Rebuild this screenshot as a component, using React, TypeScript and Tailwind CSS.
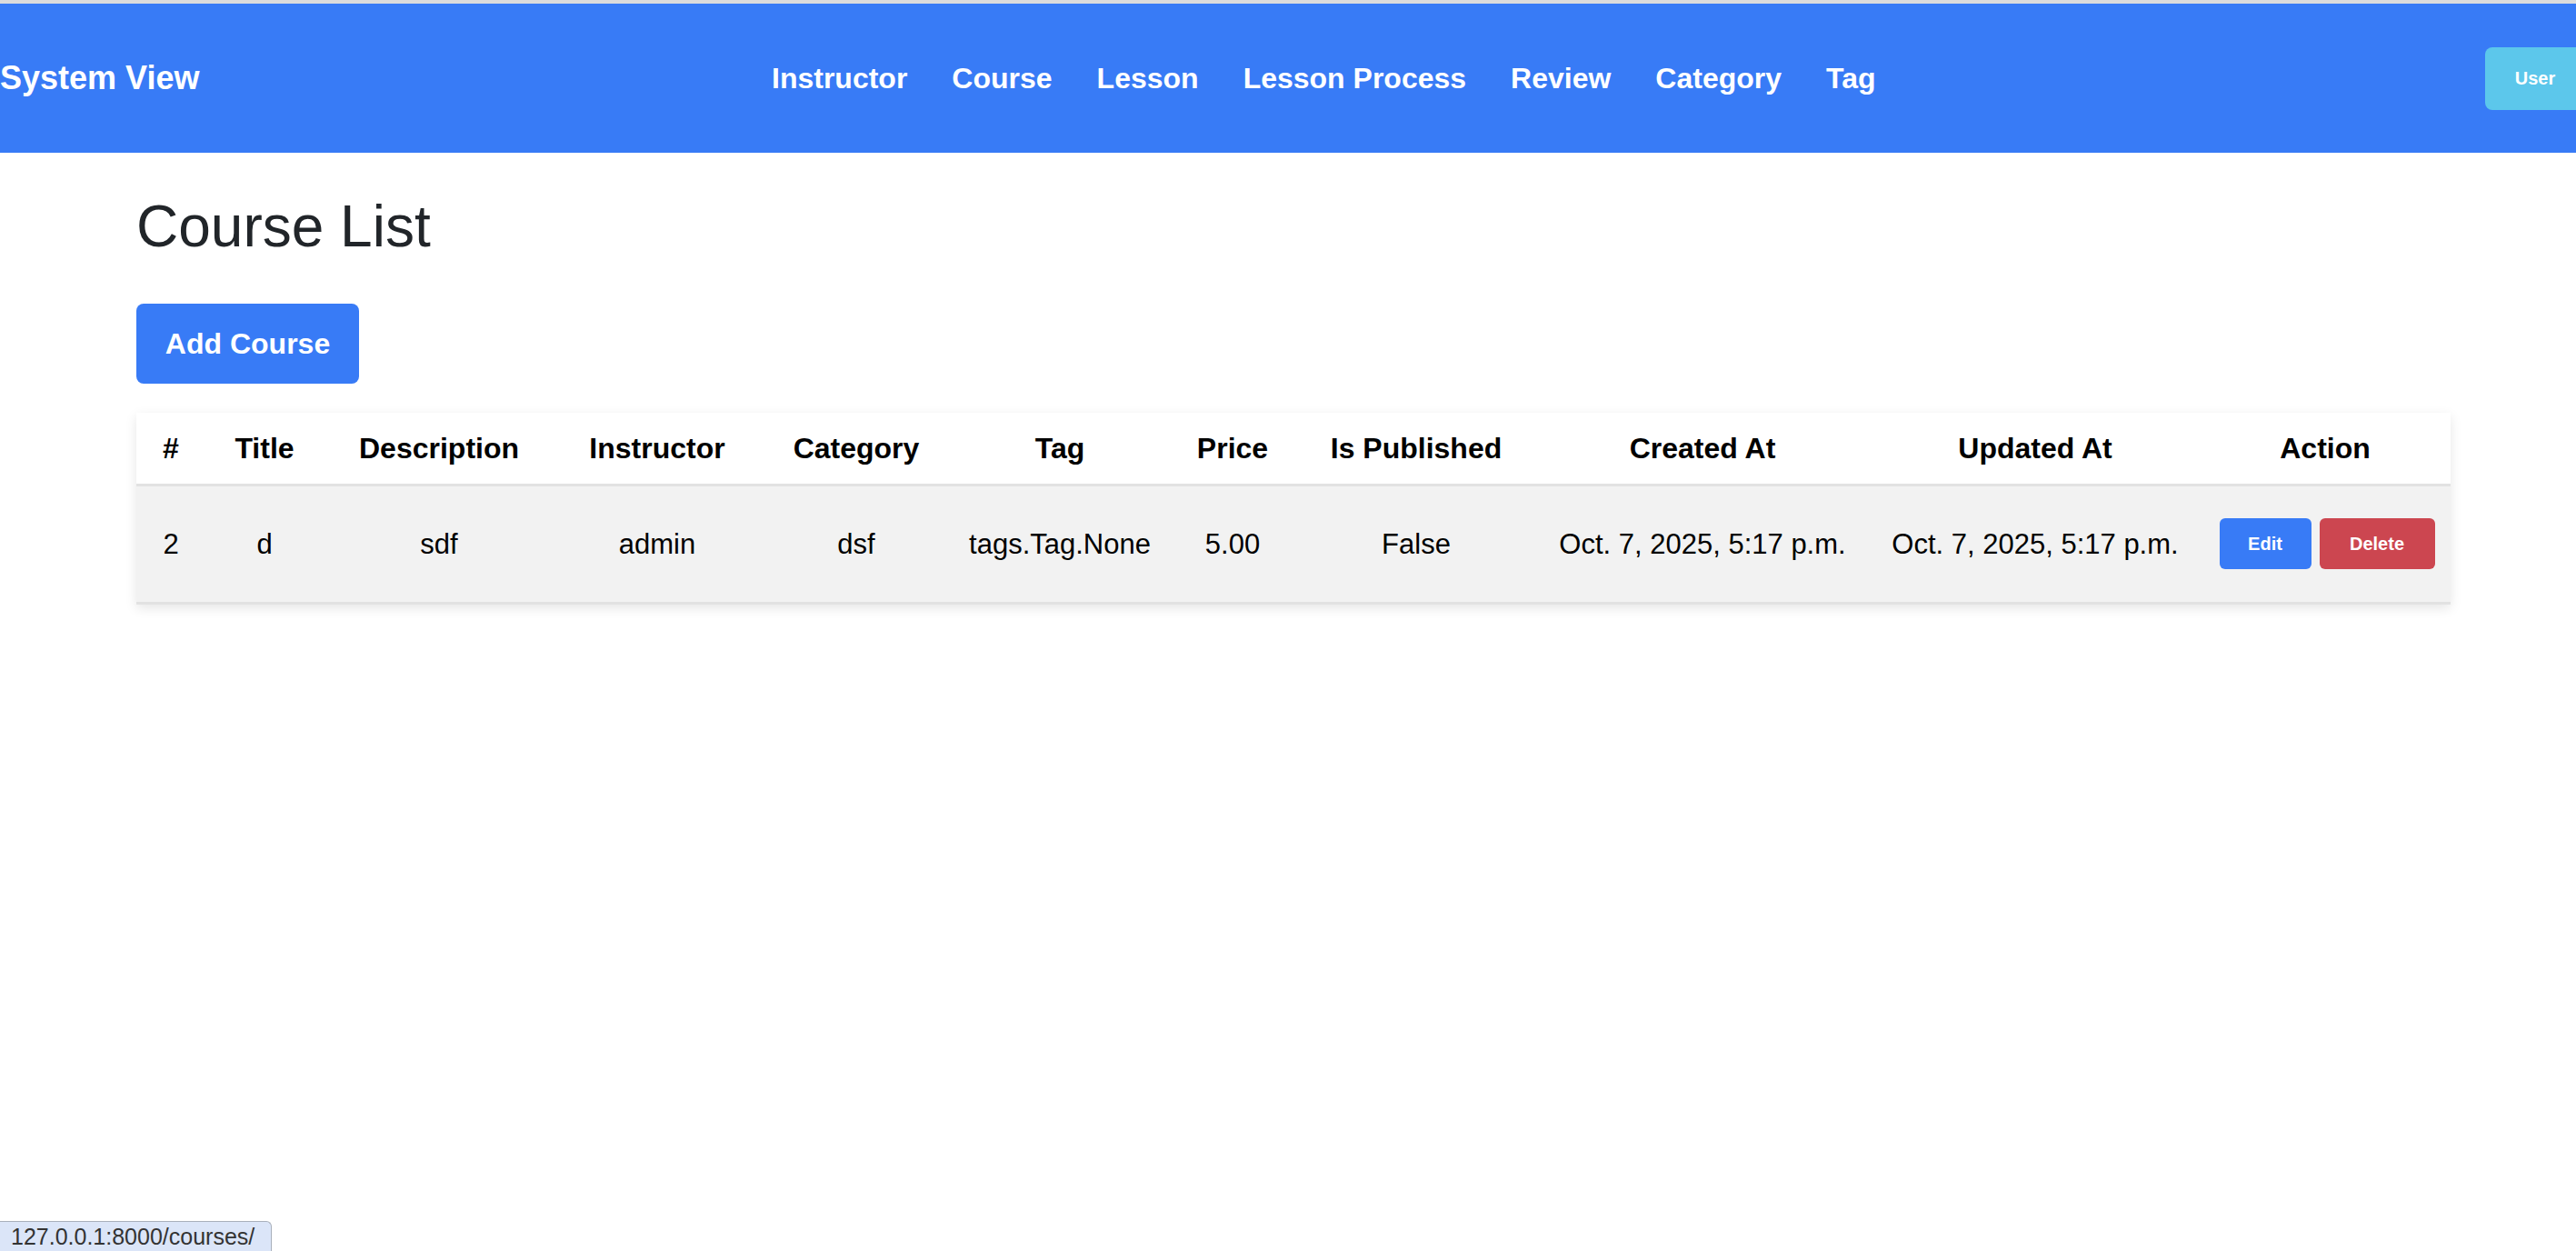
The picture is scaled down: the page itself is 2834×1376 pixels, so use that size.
import React from "react";

const navItems = ["Instructor", "Course", "Lesson", "Lesson Process", "Review", "Category", "Tag"];

const cols = [
  { h: "#", w: 76, v: "2" },
  { h: "Title", w: 130, v: "d" },
  { h: "Description", w: 254, v: "sdf" },
  { h: "Instructor", w: 226, v: "admin" },
  { h: "Category", w: 212, v: "dsf" },
  { h: "Tag", w: 236, v: "tags.Tag.None" },
  { h: "Price", w: 144, v: "5.00" },
  { h: "Is Published", w: 260, v: "False" },
  { h: "Created At", w: 370, v: "Oct. 7, 2025, 5:17 p.m." },
  { h: "Updated At", w: 362, v: "Oct. 7, 2025, 5:17 p.m." },
  { h: "Action", w: 276, v: "" },
];

export default function App() {
  return (
    <div className="min-h-screen w-full bg-white overflow-hidden" style={{ fontFamily: '"Liberation Sans", Arial, sans-serif' }}>
      <div className="h-[4px] w-full bg-[#dcdcdc]" />
      <nav className="flex h-[164px] w-full items-center overflow-hidden bg-[#387bf6] text-white">
        <div className="w-[222px] shrink-0 text-[36px] font-bold leading-none">System View</div>
        <ul className="ml-[627px] flex items-center gap-[49px]">
          {navItems.map((n) => (
            <li key={n} className="whitespace-nowrap text-[32px] font-bold leading-none">
              {n}
            </li>
          ))}
        </ul>
        <button className="ml-auto mr-[-10px] flex h-[69px] w-[110px] shrink-0 items-center justify-center rounded-[8px] bg-[#5cc7eb] text-[20px] font-bold text-white">
          User
        </button>
      </nav>

      <main className="ml-[150px] w-[2546px]">
        <h1 className="mt-[49px] h-[64px] text-[64px] font-normal leading-none text-[#212529]">Course List</h1>
        <button className="mt-[53px] flex h-[88px] w-[245px] items-center justify-center rounded-[8px] bg-[#387bf6] text-[32px] font-bold text-white">
          Add Course
        </button>
        <div className="mt-[32px] bg-white shadow-[0_4px_12px_rgba(0,0,0,0.10)]">
          <table className="w-[2546px] table-fixed border-collapse">
            <colgroup>
              {cols.map((c) => (
                <col key={c.h} style={{ width: c.w }} />
              ))}
            </colgroup>
            <thead>
              <tr className="h-[79px] border-b-[3px] border-[#e2e2e2] bg-white">
                {cols.map((c) => (
                  <th key={c.h} className="whitespace-nowrap text-center text-[32px] font-bold leading-none text-black">
                    {c.h}
                  </th>
                ))}
              </tr>
            </thead>
            <tbody>
              <tr className="h-[130px] border-b-[3px] border-[#e2e2e2] bg-[#f2f2f2]">
                {cols.slice(0, 10).map((c) => (
                  <td key={c.h} className="whitespace-nowrap text-center text-[31px] leading-none text-black">
                    {c.v}
                  </td>
                ))}
                <td className="text-center">
                  <div className="flex items-center justify-center gap-[9px] pl-[4px]">
                    <button className="flex h-[56px] w-[101px] items-center justify-center rounded-[6px] bg-[#387bf6] text-[20px] font-bold text-white">
                      Edit
                    </button>
                    <button className="flex h-[56px] w-[127px] items-center justify-center rounded-[6px] bg-[#cc4650] text-[20px] font-bold text-white">
                      Delete
                    </button>
                  </div>
                </td>
              </tr>
            </tbody>
          </table>
        </div>
      </main>

      <div className="fixed bottom-0 left-0 flex h-[33px] w-[299px] items-center rounded-tr-[6px] border-t border-r border-[#a9b0bb] bg-[#dbe5f8] pl-[12px] text-[25px] leading-none text-[#333]">
        127.0.0.1:8000/courses/
      </div>
    </div>
  );
}
